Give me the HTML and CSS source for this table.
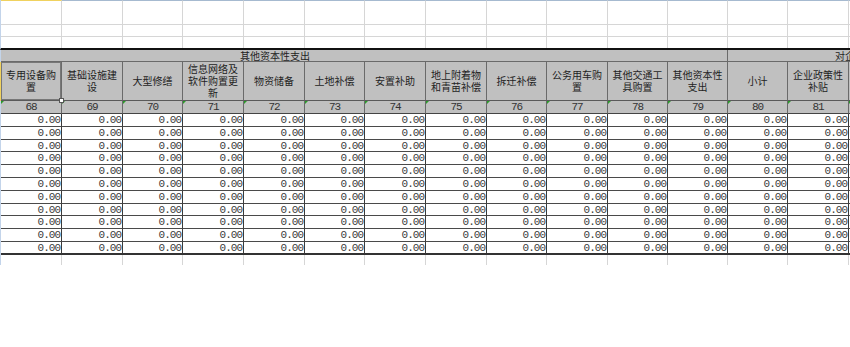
FILE: index.html
```html
<!DOCTYPE html>
<html lang="zh-CN">
<head>
<meta charset="utf-8">
<title>其他资本性支出</title>
<link rel="stylesheet" href="styles.css">
</head>
<body>
<div class="sheet">
  <div class="row blank r1">
    <div class="c first"></div><div class="c"></div><div class="c"></div><div class="c"></div><div class="c"></div><div class="c"></div><div class="c"></div><div class="c"></div><div class="c"></div><div class="c"></div><div class="c"></div><div class="c"></div><div class="c"></div><div class="c"></div><div class="c"></div>
  </div>
  <div class="row blank r2">
    <div class="c"></div><div class="c"></div><div class="c"></div><div class="c"></div><div class="c"></div><div class="c"></div><div class="c"></div><div class="c"></div><div class="c"></div><div class="c"></div><div class="c"></div><div class="c"></div><div class="c"></div><div class="c"></div><div class="c"></div>
  </div>
  <div class="row blank r3">
    <div class="c"></div><div class="c"></div><div class="c"></div><div class="c"></div><div class="c"></div><div class="c"></div><div class="c"></div><div class="c"></div><div class="c"></div><div class="c"></div><div class="c"></div><div class="c"></div><div class="c"></div><div class="c"></div><div class="c"></div>
  </div>

  <div class="row grp">
    <div class="c g1">其他资本性支出</div>
    <div class="c g2">对企事业单位的补贴</div>
  </div>

  <div class="row head">
    <div class="c sel">专用设备购置<span class="handle"></span></div>
    <div class="c">基础设施建设</div>
    <div class="c">大型修缮</div>
    <div class="c">信息网络及软件购置更新</div>
    <div class="c">物资储备</div>
    <div class="c">土地补偿</div>
    <div class="c">安置补助</div>
    <div class="c">地上附着物和青苗补偿</div>
    <div class="c">拆迁补偿</div>
    <div class="c">公务用车购置</div>
    <div class="c">其他交通工具购置</div>
    <div class="c">其他资本性支出</div>
    <div class="c">小计</div>
    <div class="c">企业政策性补贴</div>
    <div class="c"></div>
  </div>

  <div class="row nums">
    <div class="c">68</div><div class="c">69</div><div class="c">70</div><div class="c">71</div><div class="c">72</div><div class="c">73</div><div class="c">74</div><div class="c">75</div><div class="c">76</div><div class="c">77</div><div class="c">78</div><div class="c">79</div><div class="c">80</div><div class="c">81</div><div class="c"></div>
  </div>

  <div class="row data"><div class="c">0.00</div><div class="c">0.00</div><div class="c">0.00</div><div class="c">0.00</div><div class="c">0.00</div><div class="c">0.00</div><div class="c">0.00</div><div class="c">0.00</div><div class="c">0.00</div><div class="c">0.00</div><div class="c">0.00</div><div class="c">0.00</div><div class="c">0.00</div><div class="c">0.00</div><div class="c"></div></div>
  <div class="row data"><div class="c">0.00</div><div class="c">0.00</div><div class="c">0.00</div><div class="c">0.00</div><div class="c">0.00</div><div class="c">0.00</div><div class="c">0.00</div><div class="c">0.00</div><div class="c">0.00</div><div class="c">0.00</div><div class="c">0.00</div><div class="c">0.00</div><div class="c">0.00</div><div class="c">0.00</div><div class="c"></div></div>
  <div class="row data"><div class="c">0.00</div><div class="c">0.00</div><div class="c">0.00</div><div class="c">0.00</div><div class="c">0.00</div><div class="c">0.00</div><div class="c">0.00</div><div class="c">0.00</div><div class="c">0.00</div><div class="c">0.00</div><div class="c">0.00</div><div class="c">0.00</div><div class="c">0.00</div><div class="c">0.00</div><div class="c"></div></div>
  <div class="row data"><div class="c">0.00</div><div class="c">0.00</div><div class="c">0.00</div><div class="c">0.00</div><div class="c">0.00</div><div class="c">0.00</div><div class="c">0.00</div><div class="c">0.00</div><div class="c">0.00</div><div class="c">0.00</div><div class="c">0.00</div><div class="c">0.00</div><div class="c">0.00</div><div class="c">0.00</div><div class="c"></div></div>
  <div class="row data"><div class="c">0.00</div><div class="c">0.00</div><div class="c">0.00</div><div class="c">0.00</div><div class="c">0.00</div><div class="c">0.00</div><div class="c">0.00</div><div class="c">0.00</div><div class="c">0.00</div><div class="c">0.00</div><div class="c">0.00</div><div class="c">0.00</div><div class="c">0.00</div><div class="c">0.00</div><div class="c"></div></div>
  <div class="row data"><div class="c">0.00</div><div class="c">0.00</div><div class="c">0.00</div><div class="c">0.00</div><div class="c">0.00</div><div class="c">0.00</div><div class="c">0.00</div><div class="c">0.00</div><div class="c">0.00</div><div class="c">0.00</div><div class="c">0.00</div><div class="c">0.00</div><div class="c">0.00</div><div class="c">0.00</div><div class="c"></div></div>
  <div class="row data"><div class="c">0.00</div><div class="c">0.00</div><div class="c">0.00</div><div class="c">0.00</div><div class="c">0.00</div><div class="c">0.00</div><div class="c">0.00</div><div class="c">0.00</div><div class="c">0.00</div><div class="c">0.00</div><div class="c">0.00</div><div class="c">0.00</div><div class="c">0.00</div><div class="c">0.00</div><div class="c"></div></div>
  <div class="row data"><div class="c">0.00</div><div class="c">0.00</div><div class="c">0.00</div><div class="c">0.00</div><div class="c">0.00</div><div class="c">0.00</div><div class="c">0.00</div><div class="c">0.00</div><div class="c">0.00</div><div class="c">0.00</div><div class="c">0.00</div><div class="c">0.00</div><div class="c">0.00</div><div class="c">0.00</div><div class="c"></div></div>
  <div class="row data"><div class="c">0.00</div><div class="c">0.00</div><div class="c">0.00</div><div class="c">0.00</div><div class="c">0.00</div><div class="c">0.00</div><div class="c">0.00</div><div class="c">0.00</div><div class="c">0.00</div><div class="c">0.00</div><div class="c">0.00</div><div class="c">0.00</div><div class="c">0.00</div><div class="c">0.00</div><div class="c"></div></div>
  <div class="row data"><div class="c">0.00</div><div class="c">0.00</div><div class="c">0.00</div><div class="c">0.00</div><div class="c">0.00</div><div class="c">0.00</div><div class="c">0.00</div><div class="c">0.00</div><div class="c">0.00</div><div class="c">0.00</div><div class="c">0.00</div><div class="c">0.00</div><div class="c">0.00</div><div class="c">0.00</div><div class="c"></div></div>
  <div class="row data last"><div class="c">0.00</div><div class="c">0.00</div><div class="c">0.00</div><div class="c">0.00</div><div class="c">0.00</div><div class="c">0.00</div><div class="c">0.00</div><div class="c">0.00</div><div class="c">0.00</div><div class="c">0.00</div><div class="c">0.00</div><div class="c">0.00</div><div class="c">0.00</div><div class="c">0.00</div><div class="c"></div></div>

  <div class="row blank tail">
    <div class="c"></div><div class="c"></div><div class="c"></div><div class="c"></div><div class="c"></div><div class="c"></div><div class="c"></div><div class="c"></div><div class="c"></div><div class="c"></div><div class="c"></div><div class="c"></div><div class="c"></div><div class="c"></div><div class="c"></div>
  </div>
</div>
</body>
</html>
```

FILE: styles.css
```css
html, body {
  margin: 0;
  padding: 0;
  background: #ffffff;
}

.sheet {
  width: 850px;
  height: 347px;
  overflow: hidden;
  font-family: "Noto Sans CJK SC", "Liberation Sans", sans-serif;
  color: #222;
}

.row {
  display: grid;
  grid-template-columns: 61px 61px 60px 61px 61px 60px 61px 61px 60px 61px 60px 60px 60px 61px 100px;
  width: max-content;
  border-left: 1px solid #c3d4ea;
}

.c {
  box-sizing: border-box;
  position: relative;
}

/* blank grid rows */
.blank .c {
  border-right: 1px solid #d6d6d6;
  border-bottom: 1px solid #d6d6d6;
}
.r1 .c {
  height: 25px;
  border-top: 1px solid #a6bad0;
}
.r1 .c.first {
  border-top-color: #f0d25e;
}
.r2 .c {
  height: 12px;
}
.r3 {
  border-bottom: 2px solid #111;
}
.r3 .c {
  height: 11px;
  border-bottom: none;
}
.tail .c {
  height: 10px;
  border-bottom: none;
}

/* group header row */
.grp .c {
  height: 12px;
  background: #c0c0c0;
  border-right: 1px solid #6a6a6a;
  border-bottom: 1px solid #6a6a6a;
  font-size: 10px;
  line-height: 11px;
  white-space: nowrap;
  color: #1e1e1e;
}
.grp .g1 {
  grid-column: span 12;
  padding-left: 239px;
}
.grp .g2 {
  grid-column: span 3;
  padding-left: 107px;
  overflow: hidden;
}

/* column titles */
.head {
  border-left-color: #f0d25e;
}
.head .c {
  height: 39px;
  background: #c0c0c0;
  border-right: 1px solid #6a6a6a;
  border-bottom: 1px solid #5a5a5a;
  padding: 0 3px;
  display: flex;
  align-items: center;
  justify-content: center;
  text-align: center;
  font-size: 10px;
  line-height: 12px;
  color: #1e1e1e;
}
.head .sel {
  box-shadow: inset 1px 1px 0 #777, inset -1px -1px 0 #777;
}
.handle {
  position: absolute;
  right: -3px;
  bottom: -3px;
  width: 3px;
  height: 3px;
  background: #fff;
  border: 1px solid #555;
  z-index: 2;
}

/* column numbers */
.nums .c {
  height: 13px;
  background: #c0c0c0;
  border-right: 1px solid #6a6a6a;
  border-bottom: 1px solid #444;
  font-family: "Liberation Mono", monospace;
  font-size: 11px;
  letter-spacing: -1px;
  line-height: 12px;
  text-align: center;
  color: #333;
}
.nums .c::before {
  content: "";
  position: absolute;
  left: 0;
  top: 0;
  border-top: 3px solid #2a9a2a;
  border-right: 3px solid transparent;
}

/* data rows */
.data .c {
  height: 12.8px;
  background: #fff;
  border-right: 1px solid #3a3a3a;
  border-bottom: 1px solid #4a4a4a;
  font-family: "Liberation Mono", monospace;
  font-size: 11px;
  letter-spacing: -1px;
  line-height: 12px;
  text-align: right;
  padding-right: 1px;
  color: #3a3a3a;
}
.data.last .c {
  height: 13px;
  border-bottom: 2px solid #333;
}
```
